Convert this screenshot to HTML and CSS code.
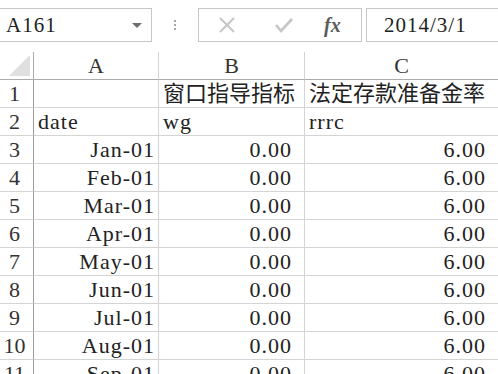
FILE: index.html
```html
<!DOCTYPE html>
<html>
<head>
  <title>Sheet</title>
  <link rel="stylesheet" href="styles.css">
</head>
<body>
  <div id="formula-bar">
    <div class="name-box">
      <span class="latin">A161</span>
      <span class="arrow"></span>
    </div>
    <div class="dots"><i></i><i></i><i></i></div>
    <div class="fx-box">
      <svg class="icon" width="18" height="18" viewBox="0 0 18 18"><path d="M2 2 L16 16 M16 2 L2 16" stroke="#c6c6c6" stroke-width="2" fill="none"/></svg>
      <svg class="icon" width="20" height="18" viewBox="0 0 20 18"><path d="M2 9 L7 15 L18 3" stroke="#c6c6c6" stroke-width="2.6" fill="none"/></svg>
      <span class="fx">fx</span>
    </div>
    <div class="value-box latin">2014/3/1</div>
  </div>

  <div id="sheet">
    <div class="corner"><span></span></div>
    <div class="col-head">A</div>
    <div class="col-head">B</div>
    <div class="col-head">C</div>

    <div class="row-head">1</div>
    <div class="cell"></div>
    <div class="cell">窗口指导指标</div>
    <div class="cell">法定存款准备金率</div>

    <div class="row-head">2</div>
    <div class="cell latin">date</div>
    <div class="cell latin">wg</div>
    <div class="cell latin">rrrc</div>

    <div class="row-head">3</div>
    <div class="cell date">Jan-01</div>
    <div class="cell num">0.00</div>
    <div class="cell num">6.00</div>

    <div class="row-head">4</div>
    <div class="cell date">Feb-01</div>
    <div class="cell num">0.00</div>
    <div class="cell num">6.00</div>

    <div class="row-head">5</div>
    <div class="cell date">Mar-01</div>
    <div class="cell num">0.00</div>
    <div class="cell num">6.00</div>

    <div class="row-head">6</div>
    <div class="cell date">Apr-01</div>
    <div class="cell num">0.00</div>
    <div class="cell num">6.00</div>

    <div class="row-head">7</div>
    <div class="cell date">May-01</div>
    <div class="cell num">0.00</div>
    <div class="cell num">6.00</div>

    <div class="row-head">8</div>
    <div class="cell date">Jun-01</div>
    <div class="cell num">0.00</div>
    <div class="cell num">6.00</div>

    <div class="row-head">9</div>
    <div class="cell date">Jul-01</div>
    <div class="cell num">0.00</div>
    <div class="cell num">6.00</div>

    <div class="row-head">10</div>
    <div class="cell date">Aug-01</div>
    <div class="cell num">0.00</div>
    <div class="cell num">6.00</div>

    <div class="row-head">11</div>
    <div class="cell date">Sep-01</div>
    <div class="cell num">0.00</div>
    <div class="cell num">6.00</div>
  </div>
</body>
</html>
```

FILE: styles.css
```css
body {
    margin: 0;
    background: #fff;
    font-family: "Liberation Serif", "Noto Sans CJK SC", serif;
    color: #222;
    overflow: hidden;
    width: 498px;
    height: 374px;
    }

#formula-bar {
    display: flex;
    align-items: flex-start;
    height: 52px;
    padding-top: 8px;
    box-sizing: border-box;
    }

.name-box {
    width: 153px;
    height: 34px;
    margin-left: -1px;
    border: 1px solid #c6c6c6;
    box-sizing: border-box;
    display: flex;
    align-items: center;
    justify-content: space-between;
    padding: 0 9px 0 6px;
    font-size: 21px;
    }

.arrow {
    width: 0;
    height: 0;
    border-left: 5px solid transparent;
    border-right: 5px solid transparent;
    border-top: 5px solid #6e6e6e;
    }

.dots {
    width: 46px;
    height: 34px;
    display: flex;
    flex-direction: column;
    align-items: center;
    justify-content: center;
    gap: 2px;
    }

.dots i {
    width: 2px;
    height: 2px;
    background: #a8a8a8;
    }

.fx-box {
    width: 164px;
    height: 34px;
    border: 1px solid #c6c6c6;
    box-sizing: border-box;
    display: flex;
    align-items: center;
    padding-left: 19px;
    }

.icon {
    display: block;
    }

.fx-box .icon:nth-child(2) {
    margin-left: 38px;
    }

.fx {
    margin-left: 30px;
    font-family: "Liberation Serif", serif;
    font-style: italic;
    font-weight: bold;
    font-size: 20px;
    color: #5b5b5b;
    }

.value-box {
    flex: 1;
    height: 34px;
    margin-left: 4px;
    margin-right: -1px;
    border: 1px solid #c6c6c6;
    box-sizing: border-box;
    padding-left: 17px;
    font-size: 21px;
    line-height: 32px;
    }

#sheet {
    display: grid;
    grid-template-columns: 34px 125px 146px 194px;
    grid-template-rows: 28px repeat(11, 28px);
    font-size: 22px;
    }

.corner {
    border-right: 1px solid #ababab;
    border-bottom: 1px solid #ababab;
    display: flex;
    align-items: flex-end;
    justify-content: flex-end;
    padding: 0 3px 3px 0;
    }

.corner span {
    width: 0;
    height: 0;
    border-left: 21px solid transparent;
    border-bottom: 21px solid #dfdfdf;
    }

.col-head {
    border-right: 1px solid #d4d4d4;
    border-bottom: 1px solid #ababab;
    text-align: center;
    line-height: 27px;
    color: #333;
    }

.row-head {
    border-right: 1px solid #9e9e9e;
    border-bottom: 1px solid #d4d4d4;
    text-align: center;
    padding-right: 4px;
    line-height: 28px;
    color: #333;
    }

.cell {
    border-right: 1px solid #d4d4d4;
    border-bottom: 1px solid #d4d4d4;
    padding: 0 4px;
    line-height: 28px;
    white-space: nowrap;
    overflow: hidden;
    }

.latin,
.date,
.num {
    letter-spacing: 1px;
    }

.date {
    text-align: right;
    padding-right: 3px;
    }

.num {
    text-align: right;
    padding-right: 12px;
    }
```
